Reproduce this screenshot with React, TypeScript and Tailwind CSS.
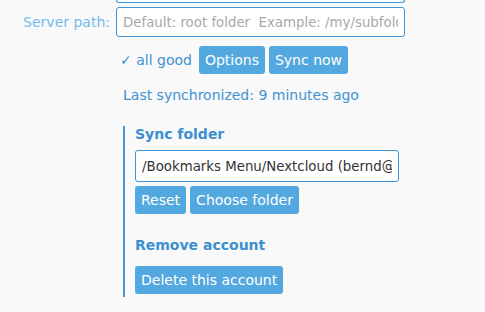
const btn =
  "h-[28px] px-[6px] rounded-[3px] bg-[#53a8e0] text-white text-[14px] leading-none flex items-center";

export default function App() {
  return (
    <div
      className="w-full h-[312px] bg-[#f9f9f9] overflow-hidden text-[14px]"
      style={{ fontFamily: '"DejaVu Sans", sans-serif' }}
    >
      {/* bottom edge of the previous input */}
      <div className="ml-[116px] w-[289px] h-[3px] border-x border-b border-[#3d94d6] rounded-b-[3px] bg-white" />

      <div className="flex items-center mt-[4px]">
        <label className="w-[110px] text-right text-[#72bbee]">Server path:</label>
        <input
          className="ml-[6px] w-[289px] h-[30px] px-[6px] border border-[#3d94d6] rounded-[3px] bg-white outline-none text-[13.33px] placeholder:text-[#a8a8a8]"
          placeholder="Default: root folder  Example: /my/subfolder"
          style={{ fontFamily: '"DejaVu Sans", sans-serif' }}
        />
      </div>

      <div className="flex items-center ml-[120px] mt-[9px] gap-[4px]">
        <span className="text-[#3f93d3] mr-[3px]">✓ all good</span>
        <button className={btn + " bg-[#6ab6e8]"}>Options</button>
        <button className={btn}>Sync now</button>
      </div>

      <div className="ml-[123px] mt-[11px] text-[#3f93d3]">Last synchronized: 9 minutes ago</div>

      <div className="ml-[123px] mt-[20px] border-l-2 border-[#4a93cc] pl-[10px] pb-[3px]">
        <h3 className="font-bold text-[#3d8fd0] leading-[14px] pt-[1px]">Sync folder</h3>
        <input
          className="mt-[9px] w-[264px] h-[32px] px-[6px] border border-[#3d94d6] rounded-[3px] bg-white outline-none text-[#333] text-[13.33px]"
          defaultValue="/Bookmarks Menu/Nextcloud (bernd@nextcloud.example.com)"
          style={{ fontFamily: '"DejaVu Sans", sans-serif' }}
        />
        <div className="flex gap-[4px] mt-[4px]">
          <button className={btn}>Reset</button>
          <button className={btn}>Choose folder</button>
        </div>
        <h3 className="font-bold text-[#3d8fd0] leading-[14px] mt-[24px]">Remove account</h3>
        <div className="flex mt-[14px]">
          <button className={btn}>Delete this account</button>
        </div>
      </div>
    </div>
  );
}
